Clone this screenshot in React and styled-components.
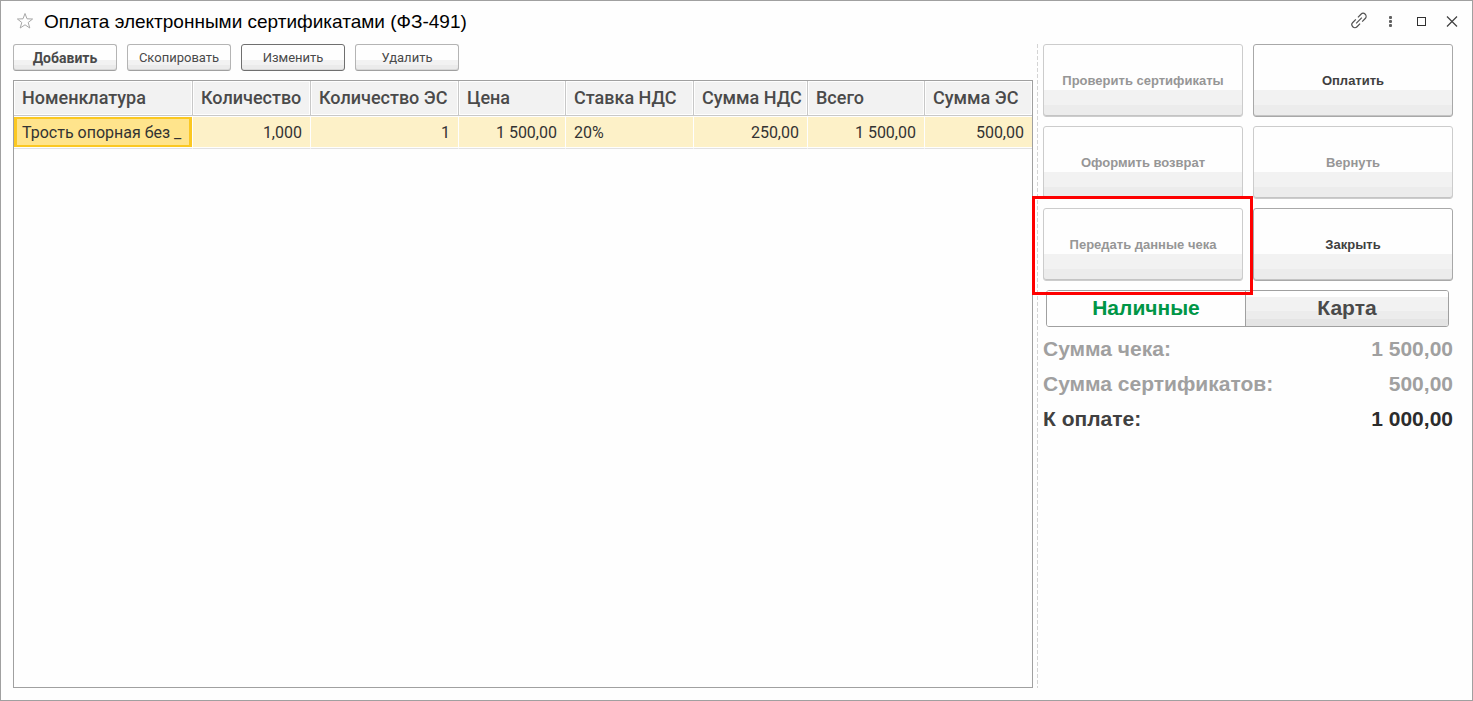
import React, { useState } from "react";
import styled, { createGlobalStyle } from "styled-components";

const Global = createGlobalStyle`
  *, *::before, *::after { box-sizing: border-box; }
  body { margin: 0; background: #fefefe; }
  button { margin: 0; cursor: default; }
`;

const sans = `"Liberation Sans", Arial, sans-serif`;
const roboto = `Roboto, "Liberation Sans", sans-serif`;

const Window = styled.div`
  min-height: 100vh;
  display: flex;
  flex-direction: column;
  border: 1px solid #a0a0a0;
  background: #fefefe;
  padding: 0 19px 12px 12px;
  font-family: ${sans};
`;

const TitleBar = styled.header`
  display: flex;
  align-items: center;
  height: 43px;
  gap: 10px;
  padding: 0 0 3px 3px;
  flex: none;
`;

const Title = styled.h1`
  margin: 0;
  flex: 1;
  font-size: 19px;
  line-height: 21px;
  font-weight: 400;
  color: #000;
`;

const IconButton = styled.button`
  border: 0;
  padding: 0;
  background: none;
  display: flex;
  align-items: center;
  justify-content: center;
  width: 18px;
  height: 18px;
  flex: none;
`;

const WindowControls = styled.div`
  display: flex;
  gap: 13px;
  margin-right: -8px;
`;

const Body = styled.div`
  flex: 1;
  display: flex;
`;

const Main = styled.main`
  flex: 1;
  min-width: 0;
  display: flex;
  flex-direction: column;
  gap: 9px;
`;

const Toolbar = styled.div`
  display: flex;
  gap: 10px;
`;

const ToolButton = styled.button`
  width: 104px;
  height: 27px;
  padding: 0;
  border: 1px solid ${(p) => (p.$current ? "#6f6f6f" : "#b4b4b4")};
  border-bottom-color: ${(p) => (p.$current ? "#6f6f6f" : "#a0a0a0")};
  border-radius: 3px;
  box-shadow: inset 0 -1px 0 #d8d8d8;
  background: linear-gradient(#fefefe 60%, #f2f2f2 60%, #f2f2f2 80%, #ebebeb 80%);
  font-family: ${roboto};
  font-size: ${(p) => (p.$primary ? 14 : 13)}px;
  line-height: 16px;
  font-weight: ${(p) => (p.$primary ? 700 : 400)};
  color: #4a4a4a;
`;

const TableFrame = styled.div`
  flex: 1;
  border: 1px solid #a0a0a0;
  overflow: hidden;
`;

const Table = styled.table`
  width: 100%;
  table-layout: fixed;
  border-collapse: separate;
  border-spacing: 0;
  font-family: ${roboto};
  font-size: 16px;
`;

const HeadCell = styled.th`
  height: 35px;
  padding: 0 0 1px 8px;
  overflow: hidden;
  white-space: nowrap;
  text-align: left;
  font-size: 18px;
  line-height: 20px;
  font-weight: 500;
  color: #4a4a4a;
  background: #f2f2f2;
  border-right: 1px solid #c8c8c8;
  border-bottom: 1px solid #c8c8c8;
  box-shadow: inset 0 0 0 1px #fefefe;
  &:last-child { border-right: 0; }
`;

const Cell = styled.td`
  height: 33px;
  padding: 2px 8px 0;
  overflow: hidden;
  white-space: nowrap;
  text-align: ${(p) => (p.$align === "left" ? "left" : "right")};
  line-height: 20px;
  color: #333;
  background: #fdf1c8;
  border-right: 1px solid #fefefe;
  border-bottom: 1px solid #e2e2e2;
  box-shadow: inset 0 1px 0 #fefefe, inset 0 -1px 0 #fefefe;
  &:last-child { border-right: 0; }
`;

const SelectedCell = styled(Cell)`
  background: #ffe48c;
  box-shadow: inset 0 1px 0 #fefefe, inset 0 -1px 0 #fefefe, inset 0 0 0 3px #fbc822;
`;

const Side = styled.aside`
  flex: none;
  width: 420px;
  padding-left: 10px;
  background: repeating-linear-gradient(#d4d4d4 0 4px, transparent 4px 6px) 4px 0 / 1px 100% no-repeat;
`;

const Actions = styled.div`
  display: grid;
  grid-template-columns: 1fr 1fr;
  gap: 9px 10px;
`;

const ActionSlot = styled.div`
  position: relative;
  display: flex;
`;

const Highlight = styled.span`
  position: absolute;
  inset: -12px -10px -14px -11px;
  border: 3px solid #fe0000;
  pointer-events: none;
  z-index: 1;
`;

const ActionButton = styled.button`
  width: 100%;
  height: 73px;
  padding: 0;
  border: 1px solid #a8a8a8;
  border-radius: 3px;
  box-shadow: inset 0 -1px 0 #c4c4c4;
  background: linear-gradient(#fefefe 45px, #f2f2f2 45px, #f2f2f2 60px, #ececec 60px);
  font-family: ${sans};
  font-size: 13px;
  line-height: 16px;
  font-weight: 700;
  color: #404040;
  &:disabled {
    color: #969696;
    border-color: #cccccc;
  }
`;

const Toggle = styled.div`
  display: flex;
  height: 37px;
  margin: 9px 4px 0 3px;
  border: 1px solid #a0a0a0;
  border-radius: 3px;
  overflow: hidden;
`;

const ToggleOption = styled.button`
  flex: ${(p) => (p.$wide ? "1 1 5px" : "1 1 0")};
  border: 0;
  padding: 0 0 2px;
  font-family: ${sans};
  font-size: 21px;
  line-height: 24px;
  font-weight: 700;
  color: ${(p) => (p.$active ? "#009646" : "#4a4a4a")};
  background: ${(p) =>
    p.$active
      ? "#fefefe"
      : "linear-gradient(#fefefe 6px, #f2f2f2 6px, #f2f2f2 20px, #ececec 20px, #ececec 28px, #e4e4e4 28px)"};
  & + & { border-left: 1px solid #a0a0a0; }
`;

const Totals = styled.dl`
  margin: 4px 0 0;
`;

const TotalRow = styled.div`
  display: flex;
  justify-content: space-between;
  font-size: 21px;
  line-height: 35px;
  font-weight: 700;
  color: ${(p) => (p.$strong ? "#404040" : "#a0a0a0")};
  dd { margin: 0; color: ${(p) => (p.$strong ? "#2c2c2c" : "#a0a0a0")}; }
`;

const columns = [
  { title: "Номенклатура", width: 179, value: "Трость опорная без _", align: "left" },
  { title: "Количество", width: 118, value: "1,000" },
  { title: "Количество ЭС", width: 148, value: "1" },
  { title: "Цена", width: 107, value: "1 500,00" },
  { title: "Ставка НДС", width: 128, value: "20%", align: "left" },
  { title: "Сумма НДС", width: 114, value: "250,00" },
  { title: "Всего", width: 117, value: "1 500,00" },
  { title: "Сумма ЭС", width: 107, value: "500,00" },
];
const totalWidth = columns.reduce((sum, c) => sum + c.width, 0);

const Col = styled.col`
  width: ${(p) => (p.$share * 100) / totalWidth}%;
`;

const actions = [
  { label: "Проверить сертификаты", disabled: true },
  { label: "Оплатить" },
  { label: "Оформить возврат", disabled: true },
  { label: "Вернуть", disabled: true },
  { label: "Передать данные чека", disabled: true, highlighted: true },
  { label: "Закрыть" },
];

const totals = [
  { label: "Сумма чека:", value: "1 500,00" },
  { label: "Сумма сертификатов:", value: "500,00" },
  { label: "К оплате:", value: "1 000,00", strong: true },
];

const StarIcon = () => (
  <svg width="18" height="18" viewBox="0 0 18 18" fill="none" stroke="#a8a8a8">
    <path d="M9 1.5 11 6.8 16.6 7 12.2 10.5 13.8 16 9 12.8 4.2 16 5.8 10.5 1.4 7 7 6.8Z" />
  </svg>
);

const LinkIcon = () => (
  <svg width="18" height="18" viewBox="0 0 18 18" fill="none" stroke="#505050" strokeWidth="1.2">
    <g transform="translate(9 8.5) rotate(-45)">
      <path d="M-1.5 -3H-5.8a3 3 0 0 0 0 6H-1.5" />
      <path d="M1.5 -3H5.8a3 3 0 0 1 0 6H1.5" />
      <path d="M-4 0H4" />
    </g>
  </svg>
);

const MenuIcon = () => (
  <svg width="18" height="18" viewBox="0 0 18 18" fill="#606060">
    <rect x="8" y="4" width="3" height="3" rx="1" />
    <rect x="8" y="8" width="3" height="3" rx="1" />
    <rect x="8" y="12" width="3" height="3" rx="1" />
  </svg>
);

const MaximizeIcon = () => (
  <svg width="18" height="18" viewBox="0 0 18 18" fill="none" stroke="#303030">
    <rect x="5.5" y="5.5" width="8" height="8" />
  </svg>
);

const CloseIcon = () => (
  <svg width="18" height="18" viewBox="0 0 18 18" fill="none" stroke="#404040" strokeWidth="1.2">
    <path d="M4 4.5 14 14.5M14 4.5 4 14.5" />
  </svg>
);

export default function App() {
  const [method, setMethod] = useState("cash");
  return (
    <>
      <Global />
      <Window>
        <TitleBar>
          <IconButton aria-label="В избранное"><StarIcon /></IconButton>
          <Title>Оплата электронными сертификатами (ФЗ-491)</Title>
          <WindowControls>
            <IconButton aria-label="Ссылка"><LinkIcon /></IconButton>
            <IconButton aria-label="Меню"><MenuIcon /></IconButton>
            <IconButton aria-label="Развернуть"><MaximizeIcon /></IconButton>
            <IconButton aria-label="Закрыть окно"><CloseIcon /></IconButton>
          </WindowControls>
        </TitleBar>
        <Body>
          <Main>
            <Toolbar>
              <ToolButton $primary>Добавить</ToolButton>
              <ToolButton>Скопировать</ToolButton>
              <ToolButton $current>Изменить</ToolButton>
              <ToolButton>Удалить</ToolButton>
            </Toolbar>
            <TableFrame>
              <Table>
                <colgroup>
                  {columns.map((c) => <Col key={c.title} $share={c.width} />)}
                </colgroup>
                <thead>
                  <tr>{columns.map((c) => <HeadCell key={c.title} scope="col">{c.title}</HeadCell>)}</tr>
                </thead>
                <tbody>
                  <tr>
                    {columns.map((c, i) => {
                      const Part = i === 0 ? SelectedCell : Cell;
                      return <Part key={c.title} $align={c.align}>{c.value}</Part>;
                    })}
                  </tr>
                </tbody>
              </Table>
            </TableFrame>
          </Main>
          <Side>
            <Actions>
              {actions.map((a) => (
                <ActionSlot key={a.label}>
                  <ActionButton disabled={a.disabled}>{a.label}</ActionButton>
                  {a.highlighted && <Highlight />}
                </ActionSlot>
              ))}
            </Actions>
            <Toggle role="group" aria-label="Способ оплаты">
              <ToggleOption $active={method === "cash"} aria-pressed={method === "cash"} onClick={() => setMethod("cash")}>
                Наличные
              </ToggleOption>
              <ToggleOption $wide $active={method === "card"} aria-pressed={method === "card"} onClick={() => setMethod("card")}>
                Карта
              </ToggleOption>
            </Toggle>
            <Totals>
              {totals.map((t) => (
                <TotalRow key={t.label} $strong={t.strong}>
                  <dt>{t.label}</dt>
                  <dd>{t.value}</dd>
                </TotalRow>
              ))}
            </Totals>
          </Side>
        </Body>
      </Window>
    </>
  );
}
